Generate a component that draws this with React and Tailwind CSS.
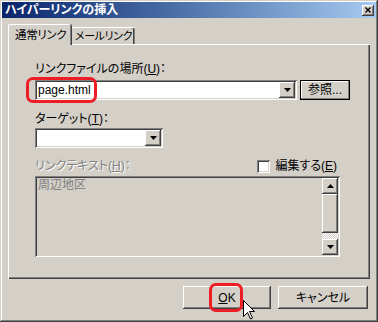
import React from 'react'

const raised = 'shadow-[inset_-1px_-1px_#404040,inset_1px_1px_#ffffff,inset_-2px_-2px_#808080,inset_2px_2px_#d4d0c8]'
const sunken = 'shadow-[inset_1px_1px_#808080,inset_-1px_-1px_#ffffff,inset_2px_2px_#404040,inset_-2px_-2px_#d4d0c8]'

function Arrow({ dir = 'down' }) {
  return (
    <svg width="7" height="4" viewBox="0 0 7 4" className={dir === 'up' ? 'rotate-180' : ''}>
      <path d="M0 0h7L3.5 4z" fill="#000" />
    </svg>
  )
}

function DropButton() {
  return (
    <div className={`w-[16px] h-[16px] bg-[#d4d0c8] flex items-center justify-center ${raised}`}>
      <Arrow />
    </div>
  )
}

function Combo({ width, value }) {
  return (
    <div className={`h-[20px] bg-white flex items-center p-[2px] ${sunken}`} style={{ width }}>
      <span className="flex-1 pl-[1px] text-[12px] leading-[14px] text-black">{value}</span>
      <DropButton />
    </div>
  )
}

function U({ children }) {
  return <span className="underline underline-offset-[1px]">{children}</span>
}

export default function App() {
  return (
    <div className="relative w-[378px] h-[322px] bg-[#d4d0c8] p-[2px] flex flex-col font-['Liberation_Sans','Noto_Sans_CJK_JP',sans-serif] [font-feature-settings:'palt'] text-black shadow-[inset_-1px_-1px_#404040,inset_1px_1px_#d4d0c8,inset_-2px_-2px_#808080,inset_2px_2px_#ffffff] select-none">
      {/* title bar */}
      <div className="h-[16px] flex items-center justify-between pl-[3px] pr-[2px] bg-gradient-to-r from-[#0a246a] to-[#a6caf0]">
        <span className="text-white font-bold text-[12px] leading-[14px]">ハイパーリンクの挿入</span>
        <div className={`w-[12px] h-[11px] bg-[#d4d0c8] flex items-center justify-center ${raised}`}>
          <svg width="6" height="6" viewBox="0 0 6 6">
            <path d="M0.5 0.5l5 5M5.5 0.5l-5 5" stroke="#000" strokeWidth="1.4" />
          </svg>
        </div>
      </div>

      <div className="flex flex-col px-[6px] pt-[6px]">
        {/* tabs */}
        <div className="flex items-end h-[20px] whitespace-nowrap">
          <div className="relative z-10 w-[63px] h-[21px] -mb-[1px] bg-[#d4d0c8] rounded-t-[2px] border-l border-t border-white shadow-[inset_-1px_0_#808080,1px_0_#404040] pl-[6px] pt-[3px] text-[11.5px] leading-[14px] tracking-[-0.3px]">
            通常リンク
          </div>
          <div className="w-[64px] h-[17px] bg-[#d4d0c8] rounded-t-[2px] border-t border-white shadow-[inset_-1px_0_#808080,inset_-2px_0_#404040] pl-[4px] pt-[1px] text-[11px] leading-[14px] tracking-[-0.4px]">
            メールリンク
          </div>
        </div>

        {/* panel */}
        <div className="h-[235px] pl-[27px] pt-[18px] flex flex-col shadow-[inset_1px_1px_#ffffff,inset_-1px_-1px_#404040,inset_-2px_-2px_#808080]">
          <div className="text-[12px] leading-[14px]">リンクファイルの場所(<U>U</U>)：</div>
          <div className="mt-[4px] flex items-center gap-[3px]">
            <Combo width={262} value="page.html" />
            <div className="w-[50px] h-[20px] border border-black bg-[#d4d0c8] flex items-center justify-center shadow-[inset_-1px_-1px_#808080,inset_1px_1px_#ffffff] text-[12px] leading-[14px]">
              参照...
            </div>
          </div>

          <div className="mt-[12px] text-[12px] leading-[14px]">ターゲット(<U>T</U>)：</div>
          <div className="mt-[2px]">
            <Combo width={128} value="" />
          </div>

          <div className="mt-[11px] w-[305px] flex items-center justify-between">
            <span className="text-[12px] leading-[14px] text-[#808080] [text-shadow:1px_1px_#ffffff]">
              リンクテキスト(<U>H</U>)：
            </span>
            <div className="flex items-center gap-[5px] pr-[3px]">
              <div className={`w-[13px] h-[13px] bg-white ${sunken}`} />
              <span className="text-[12px] leading-[14px]">編集する(<U>E</U>)</span>
            </div>
          </div>

          <div className={`mt-[3px] w-[305px] h-[81px] p-[2px] flex ${sunken}`}>
            <div className="flex-1 pl-[1px] text-[12px] leading-[14px] text-[#808080]">周辺地区</div>
            <div className="w-[16px] flex flex-col">
              <div className={`h-[16px] flex items-center justify-center ${raised}`}>
                <Arrow dir="up" />
              </div>
              <div className={`h-[39px] ${raised}`} />
              <div className="h-[6px] bg-[repeating-conic-gradient(#ffffff_0%_25%,#d4d0c8_0%_50%)] bg-[length:2px_2px]" />
              <div className={`h-[16px] flex items-center justify-center ${raised}`}>
                <Arrow />
              </div>
            </div>
          </div>
        </div>

        {/* buttons */}
        <div className="mt-[7px] flex justify-end gap-[7px] pr-[2px]">
          <div className={`w-[88px] h-[23px] flex items-center justify-center text-[12px] leading-[14px] ${raised}`}>
            <U>O</U>K
          </div>
          <div className={`w-[90px] h-[23px] flex items-center justify-center text-[12px] leading-[14px] ${raised}`}>
            キャンセル
          </div>
        </div>
      </div>

      {/* annotations */}
      <div className="absolute left-[26px] top-[77px] w-[71px] h-[26px] border-[3px] border-[#ee1c25] rounded-[7px]" />
      <div className="absolute left-[209px] top-[283px] w-[34px] h-[29px] border-[3px] border-[#ee1c25] rounded-[7px]" />
      <svg className="absolute left-[243px] top-[300px]" width="12" height="20" viewBox="0 0 12 20">
        <path d="M0.5 0.5V16.5L4.5 12.5L7.5 19L9.5 18L6.5 11.5H11.5Z" fill="#fff" stroke="#000" strokeWidth="1" strokeLinejoin="miter" />
      </svg>
    </div>
  )
}
